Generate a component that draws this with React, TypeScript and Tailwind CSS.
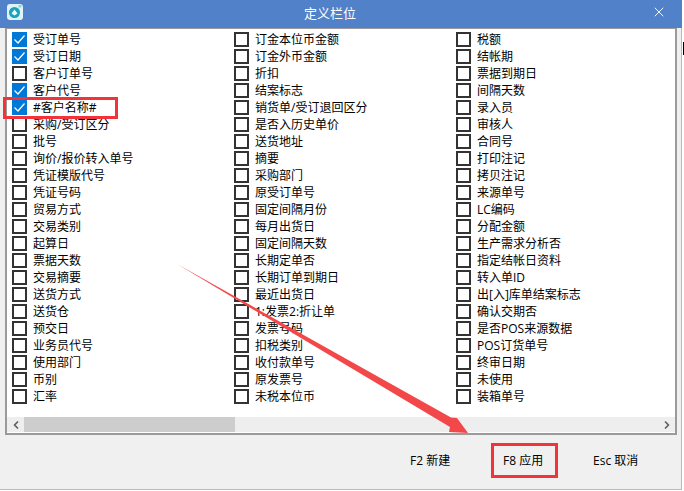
import { ChevronLeft, ChevronRight, X } from 'lucide-react'

const col1: [string, boolean?][] = [
  ['受订单号', true], ['受订日期', true], ['客户订单号'], ['客户代号', true], ['#客户名称#', true], ['采购/受订区分'],
  ['批号'], ['询价/报价转入单号'], ['凭证模版代号'], ['凭证号码'], ['贸易方式'], ['交易类别'], ['起算日'], ['票据天数'],
  ['交易摘要'], ['送货方式'], ['送货仓'], ['预交日'], ['业务员代号'], ['使用部门'], ['币别'], ['汇率'],
]
const col2 = [
  '订金本位币金额', '订金外币金额', '折扣', '结案标志', '销货单/受订退回区分', '是否入历史单价', '送货地址', '摘要',
  '采购部门', '原受订单号', '固定间隔月份', '每月出货日', '固定间隔天数', '长期定单否', '长期订单到期日', '最近出货日',
  '1:发票2:折让单', '发票号码', '扣税类别', '收付款单号', '原发票号', '未税本位币',
]
const col3 = [
  '税额', '结帐期', '票据到期日', '间隔天数', '录入员', '审核人', '合同号', '打印注记', '拷贝注记', '来源单号', 'LC编码',
  '分配金额', '生产需求分析否', '指定结帐日资料', '转入单ID', '出[入]库单结案标志', '确认交期否', '是否POS来源数据',
  'POS订货单号', '终审日期', '未使用', '装箱单号',
]

function Row({ label, checked }: { label: string; checked?: boolean }) {
  return (
    <div className="flex h-[17px] items-center gap-[6px] whitespace-nowrap">
      {checked ? (
        <div className="flex h-[15px] w-[15px] shrink-0 items-center justify-center bg-[#0078d7]">
          <svg width="13" height="13" viewBox="0 0 13 13" fill="none" stroke="white" strokeWidth="1.2">
            <path d="M1.5 6.5 L5 10 L11.5 2.5" />
          </svg>
        </div>
      ) : (
        <div className="h-[15px] w-[15px] shrink-0 border-2 border-[#333333] bg-white" />
      )}
      <span className="text-[12px] leading-[17px] text-black">{label}</span>
    </div>
  )
}

export default function App() {
  return (
    <div className="relative h-[491px] w-[684px] overflow-hidden bg-white font-['Open_Sans','Noto_Sans_CJK_SC',sans-serif]">
      <div className="h-[489px] w-[682px] bg-[#f0f0f0]">
        {/* Title bar */}
        <div className="relative flex h-[28px] items-center justify-center bg-[#5181c9] pr-[22px]">
          <svg className="absolute left-[7px] top-[4px]" width="16" height="16" viewBox="0 0 16 16">
            <rect width="16" height="16" rx="3" fill="#dff4f6" />
            <circle cx="7.5" cy="8.5" r="5.5" fill="#1ba3bb" />
            <path d="M7.5 5.5 L10.5 9.5 L7.5 11.5 L4.5 9.5 Z" fill="#eefafb" />
            <rect x="11.5" y="1" width="3" height="2.5" fill="#8fd2de" />
          </svg>
          <span className="text-[13px] text-white">定义栏位</span>
          <X className="absolute left-[651px] top-[4px] text-white" size={16} strokeWidth={1.4} />
        </div>

        {/* Field list */}
        <div className="ml-[5px] flex h-[407px] w-[672px] flex-col border-2 border-t border-[#9a9a9a] bg-white pb-px">
          <div className="flex flex-1 pl-[5px] pt-[2px]">
            <div className="w-[222px] shrink-0">
              {col1.map(([label, checked]) => (
                <Row key={label} label={label} checked={checked} />
              ))}
            </div>
            <div className="w-[222px] shrink-0">
              {col2.map((label) => (
                <Row key={label} label={label} />
              ))}
            </div>
            <div className="w-[200px] shrink-0">
              {col3.map((label) => (
                <Row key={label} label={label} />
              ))}
            </div>
          </div>
          {/* Scrollbar */}
          <div className="flex h-[15px] items-center bg-[#eeeeee]">
            <div className="flex h-[15px] w-[17px] items-center justify-center">
              <ChevronLeft size={12} strokeWidth={3.5} className="text-[#606060]" />
            </div>
            <div className="h-[15px] w-[211px] bg-[#cdcdcd]" />
            <div className="flex-1" />
            <div className="flex h-[15px] w-[17px] items-center justify-center">
              <ChevronRight size={12} strokeWidth={3.5} className="text-[#606060]" />
            </div>
          </div>
        </div>

        {/* Footer buttons */}
        <div className="flex h-[54px] items-center pb-[2px] pl-[410px] text-[12px] text-black">
          <span className="w-[93px] whitespace-nowrap">F2 新建</span>
          <span className="w-[90px] whitespace-nowrap">F8 应用</span>
          <span className="whitespace-nowrap">Esc 取消</span>
        </div>
      </div>
      <div className="absolute left-0 top-[489px] h-px w-[682px] bg-[#a9bcdc]" />
      <div className="absolute left-[681px] top-[28px] h-[461px] w-px bg-[#a9bcdc]" />
      <div className="absolute left-[683px] top-[42px] h-[13px] w-px bg-black" />

      {/* Annotations */}
      <div className="absolute left-[3px] top-[97px] h-[22px] w-[115px] border-[3px] border-[#f2343a]" />
      <div className="absolute left-[491px] top-[443px] h-[35px] w-[67px] border-[3px] border-[#f2343a]" />
      <svg className="pointer-events-none absolute inset-0" width="684" height="491" viewBox="0 0 684 491">
        <polygon points="177,264 451,417.5 457,418 468,433 449,432 450,427" fill="#f2484a" />
      </svg>
    </div>
  )
}
